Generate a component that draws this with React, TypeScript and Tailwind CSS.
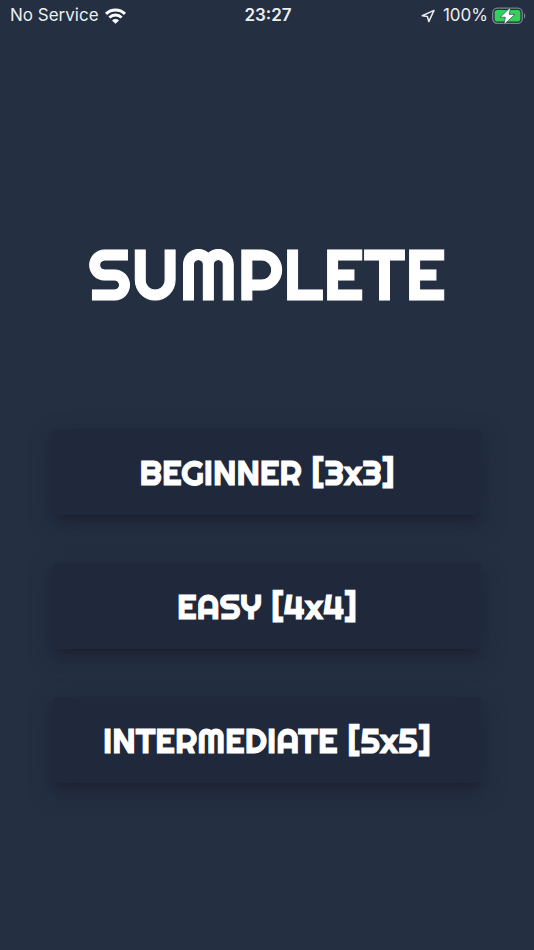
import React from 'react';

const levels = [
  { name: 'BEGINNER', size: '3x3' },
  { name: 'EASY', size: '4x4' },
  { name: 'INTERMEDIATE', size: '5x5' },
];

const WifiIcon: React.FC = () => (
  <svg width="21" height="16" viewBox="0 0 21 16" fill="none" stroke="#fff" strokeWidth="3" aria-hidden="true">
    <path d="M1 5.9C6.4.7 14.6.7 20 5.9" />
    <path d="M4.4 9.5c3.5-3.2 8.7-3.2 12.2 0" />
    <path d="M10.5 15.8 7 12.4c2-1.8 5-1.8 7 0z" fill="#fff" stroke="none" />
  </svg>
);

const LocationIcon: React.FC = () => (
  <svg width="14" height="14" viewBox="0 0 14 14" fill="none" stroke="#e8eaed" strokeWidth="1.5" strokeLinejoin="round" aria-hidden="true">
    <path d="M13 1.4 1.2 6.7l5.2.8 1.4 5.1z" />
  </svg>
);

const BatteryIcon: React.FC = () => (
  <svg width="34" height="18" viewBox="0 0 34 18" aria-hidden="true">
    <rect x="0.7" y="1.2" width="29.6" height="15.2" rx="4.6" fill="none" stroke="#7c838f" strokeWidth="1.3" />
    <rect x="2.6" y="3.1" width="25.8" height="11.4" rx="2.8" fill="#32d158" />
    <path d="M32 6.2c1.8.8 1.8 4.4 0 5.2z" fill="#7c838f" />
    <path d="M18.6.2 8.2 10.2h5.2L11.8 17.8l11-10.4h-5.6z" fill="#fff" stroke="#242f42" strokeWidth="0.6" />
  </svg>
);

const StatusBar: React.FC = () => (
  <header className="grid h-8 grid-cols-[1fr_auto_1fr] items-center pl-[10px] pr-[8px] font-['Inter',sans-serif] text-[17px] text-[#eceef0]">
    <div className="flex items-center gap-[6px]">
      <span>No Service</span>
      <WifiIcon />
    </div>
    <time className="font-semibold">23:27</time>
    <div className="flex items-center justify-end gap-1">
      <LocationIcon />
      <span className="ml-1">100%</span>
      <BatteryIcon />
    </div>
  </header>
);

export default function App() {
  return (
    <div className="min-h-screen bg-[#242f42] text-white">
      <StatusBar />
      <main className="px-[10%] pt-[197px] pb-12 font-['Righteous','Inter',sans-serif] [-webkit-text-stroke:1px_#fff]">
        <h1 className="text-center text-[71px] leading-[90px]">SUMPLETE</h1>
        <div className="mt-[110px] flex flex-col gap-12">
          {levels.map(level => (
            <button
              key={level.name}
              className="h-[86px] w-full whitespace-nowrap rounded-sm bg-[#20283b] pt-[2px] text-[34px] shadow-[0_7px_8px_-4px_rgba(28,30,42,0.8),0_8px_22px_rgba(30,32,50,0.5)]"
            >
              {level.name} [{level.size}]
            </button>
          ))}
        </div>
      </main>
    </div>
  );
}
